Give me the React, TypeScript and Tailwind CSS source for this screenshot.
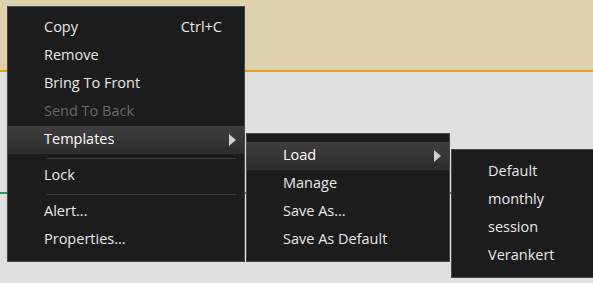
import React from "react";

type Item =
  | { kind: "item"; label: string; shortcut?: string; disabled?: boolean; active?: boolean; sub?: boolean }
  | { kind: "sep" };

const mainItems: Item[] = [
  { kind: "item", label: "Copy", shortcut: "Ctrl+C" },
  { kind: "item", label: "Remove" },
  { kind: "item", label: "Bring To Front" },
  { kind: "item", label: "Send To Back", disabled: true },
  { kind: "item", label: "Templates", active: true, sub: true },
  { kind: "sep" },
  { kind: "item", label: "Lock" },
  { kind: "sep" },
  { kind: "item", label: "Alert..." },
  { kind: "item", label: "Properties..." },
];

const templateItems: Item[] = [
  { kind: "item", label: "Load", active: true, sub: true },
  { kind: "item", label: "Manage" },
  { kind: "item", label: "Save As..." },
  { kind: "item", label: "Save As Default" },
];

const loadItems: Item[] = [
  { kind: "item", label: "Default" },
  { kind: "item", label: "monthly" },
  { kind: "item", label: "session" },
  { kind: "item", label: "Verankert" },
];

const Arrow = () => (
  <svg width="7" height="12" viewBox="0 0 7 12" className="absolute right-[8px] top-1/2 -translate-y-1/2">
    <path d="M0 0 L7 6 L0 12 Z" fill="#cfcfcf" />
  </svg>
);

const MenuList = ({ items }: { items: Item[] }) => (
  <ul>
    {items.map((it, i) =>
      it.kind === "sep" ? (
        <li key={i} className="h-[8px] flex items-center pl-[39px] pr-[8px]">
          <div className="h-px w-full bg-[#3f3f3f]" />
        </li>
      ) : (
        <li
          key={i}
          className={
            "relative h-[28px] flex items-center justify-between pl-[36px] pr-[22px] pb-[2px] " +
            (it.active ? "bg-gradient-to-b from-[#3e3e3e] to-[#2d2d2d] text-white " : "") +
            (it.disabled ? "text-[#676767]" : "text-[#e8e8e8]")
          }
        >
          <span>{it.label}</span>
          {it.shortcut && <span>{it.shortcut}</span>}
          {it.sub && <Arrow />}
        </li>
      )
    )}
  </ul>
);

export default function App() {
  return (
    <div className="relative w-[593px] h-[283px] overflow-hidden bg-[#e0e0e0] font-['Open_Sans',sans-serif] text-[14.5px]">
      <div className="h-[70px] bg-[#ddd1ad]" />
      <div className="h-[2px] bg-[#e2a21f]" />
      <div className="mt-[120px] h-[2px] bg-[#2f9a5b]" />

      <div className="absolute left-[7px] top-[6px] w-[238px] border border-[#474747] bg-[#1c1c1c] py-[7px]">
        <MenuList items={mainItems} />
      </div>

      <div className="absolute left-[246px] top-[133px] w-[204px] border border-[#474747] bg-[#1c1c1c] pt-[8px] pb-[7px]">
        <MenuList items={templateItems} />
      </div>

      <div className="absolute left-[451px] top-[149px] w-[170px] border border-[#474747] bg-[#1c1c1c] pt-[8px] pb-[7px]">
        <MenuList items={loadItems} />
      </div>
    </div>
  );
}
